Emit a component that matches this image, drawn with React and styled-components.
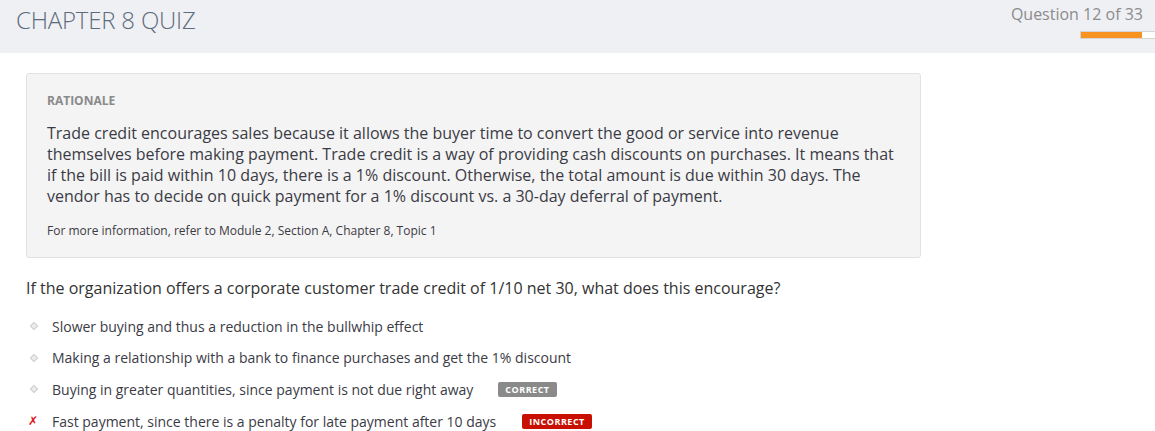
import React from "react";
import styled, { createGlobalStyle } from "styled-components";

const GlobalStyle = createGlobalStyle`
  body {
    margin: 0;
    background: #ffffff;
    font-family: "Open Sans", "Liberation Sans", sans-serif;
    color: #333;
  }
`;

const Header = styled.header`
  height: 53px;
  background: #eff0f4;
  display: flex;
  justify-content: space-between;
  align-items: flex-start;
`;

const Title = styled.h1`
  margin: 3px 0 0 16px;
  font-size: 24px;
  font-weight: 300;
  line-height: 33px;
  color: #5d6b7c;
  letter-spacing: -0.2px;
`;

const Progress = styled.div`
  display: flex;
  flex-direction: column;
  align-items: flex-end;
  padding-top: 3px;
`;

const Counter = styled.div`
  font-size: 16px;
  line-height: 22px;
  color: #8c8c8c;
  margin-right: 12px;
`;

const Bar = styled.div`
  width: 74px;
  height: 6px;
  margin-top: 6px;
  background: #fff;
  border: 1px solid #d5d5d5;
  border-right: none;
`;

const Fill = styled.div`
  height: 100%;
  background: #f7931e;
`;

const Content = styled.main`
  padding: 20px 0 0 26px;
`;

const Rationale = styled.section`
  width: 895px;
  box-sizing: border-box;
  background: #f4f4f4;
  border: 1px solid #e2e2e2;
  border-radius: 3px;
  padding: 18px 20px 18px 20px;
`;

const Label = styled.div`
  font-size: 12px;
  font-weight: 700;
  line-height: 17px;
  color: #8a8a8a;
`;

const Body = styled.p`
  margin: 14px 0 0;
  font-size: 16px;
  line-height: 21px;
  color: #3b3b45;
`;

const Note = styled.p`
  margin: 15px 0 0;
  font-size: 12px;
  line-height: 17px;
  color: #3b3b45;
`;

const Question = styled.p`
  margin: 19px 0 0;
  font-size: 16px;
  line-height: 22px;
  color: #333;
`;

const Options = styled.ul`
  list-style: none;
  margin: 17px 0 0;
  padding: 0;
  display: flex;
  flex-direction: column;
  gap: 11.7px;
`;

const Option = styled.li`
  display: flex;
  align-items: center;
  height: 20px;
  font-size: 14px;
  color: #3b3b45;
`;

const Marker = styled.span`
  width: 26px;
  display: flex;
  justify-content: flex-start;
  align-items: center;
  flex-shrink: 0;
`;

const Diamond = styled.span`
  width: 4px;
  height: 4px;
  border: 1px solid #cfcfcf;
  background: #ececec;
  transform: rotate(45deg);
  margin-left: 5px;
`;

const Cross = styled.span`
  color: #e01010;
  font-family: "DejaVu Sans", sans-serif;
  font-weight: 700;
  font-size: 12px;
  line-height: 1;
  margin-left: 2px;
`;

const Badge = styled.span`
  margin-left: ${(p) => p.$gap}px;
  height: 15px;
  padding: 0 7px;
  display: inline-flex;
  align-items: center;
  border-radius: 2px;
  font-size: 9px;
  font-weight: 700;
  letter-spacing: 0.5px;
  color: #fff;
  background: ${(p) => (p.$ok ? "#8a8a8a" : "#c80f00")};
`;

const options = [
  { text: "Slower buying and thus a reduction in the bullwhip effect" },
  { text: "Making a relationship with a bank to finance purchases and get the 1% discount" },
  { text: "Buying in greater quantities, since payment is not due right away", badge: "CORRECT", ok: true, gap: 25 },
  { text: "Fast payment, since there is a penalty for late payment after 10 days", badge: "INCORRECT", wrong: true, gap: 26 },
];

export default function App() {
  return (
    <>
      <GlobalStyle />
      <Header>
        <Title>CHAPTER 8 QUIZ</Title>
        <Progress>
          <Counter>Question 12 of 33</Counter>
          <Bar>
            <Fill style={{ width: `${(12 / 33) * 100 + 46}%` }} />
          </Bar>
        </Progress>
      </Header>
      <Content>
        <Rationale>
          <Label>RATIONALE</Label>
          <Body>
            Trade credit encourages sales because it allows the buyer time to convert the good or service into revenue
            themselves before making payment. Trade credit is a way of providing cash discounts on purchases. It means that
            if the bill is paid within 10 days, there is a 1% discount. Otherwise, the total amount is due within 30 days. The
            vendor has to decide on quick payment for a 1% discount vs. a 30-day deferral of payment.
          </Body>
          <Note>For more information, refer to Module 2, Section A, Chapter 8, Topic 1</Note>
        </Rationale>
        <Question>
          If the organization offers a corporate customer trade credit of 1/10 net 30, what does this encourage?
        </Question>
        <Options>
          {options.map((o) => (
            <Option key={o.text}>
              <Marker>{o.wrong ? <Cross>✗</Cross> : <Diamond />}</Marker>
              {o.text}
              {o.badge && (
                <Badge $ok={o.ok} $gap={o.gap}>
                  {o.badge}
                </Badge>
              )}
            </Option>
          ))}
        </Options>
      </Content>
    </>
  );
}
